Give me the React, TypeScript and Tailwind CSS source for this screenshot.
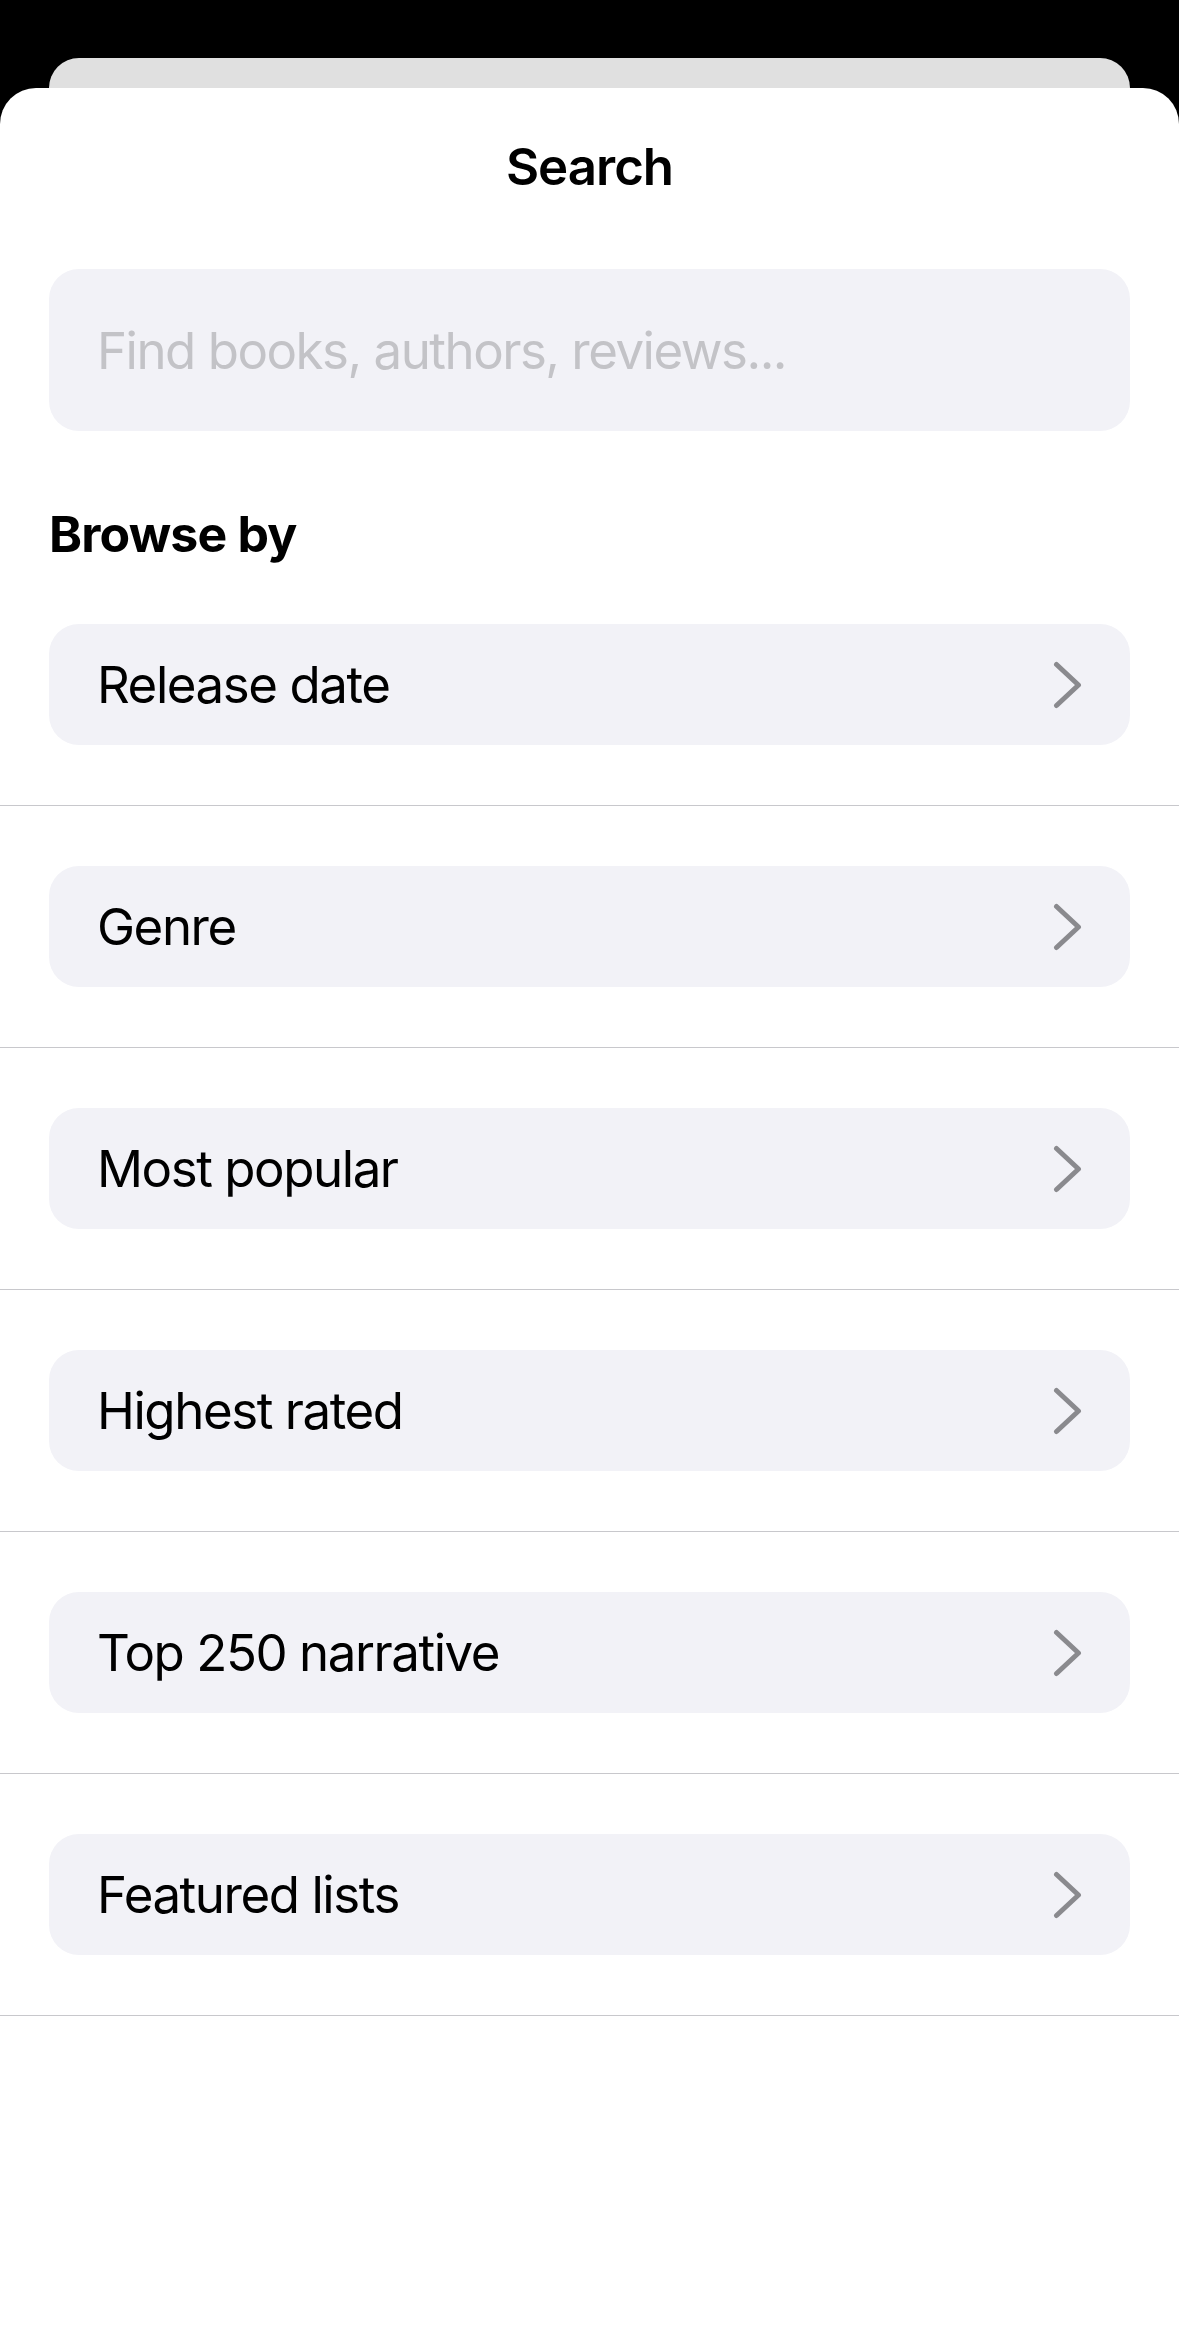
import React from "react";

const rows = [
  "Release date",
  "Genre",
  "Most popular",
  "Highest rated",
  "Top 250 narrative",
  "Featured lists",
];

const Chevron = () => (
  <svg width="29" height="48" viewBox="0 0 29 48" fill="none">
    <path
      d="M3.5 3.5 L25.5 24 L3.5 44.5"
      stroke="#8a8a8e"
      strokeWidth="5"
      strokeLinecap="round"
      strokeLinejoin="round"
    />
  </svg>
);

const App = () => {
  return (
    <div
      className="w-[1179px] h-[2325px] bg-black flex flex-col overflow-hidden"
      style={{ fontFamily: "Inter, 'Noto Sans', sans-serif" }}
    >
      {/* sheet behind */}
      <div className="mx-[49px] mt-[58px] h-[30px] rounded-t-[30px] bg-[#e0e0e0] shrink-0" />

      {/* search sheet */}
      <div className="flex-1 bg-white rounded-t-[36px] flex flex-col">
        <h1 className="pt-[48px] text-center text-[51px] leading-[61px] font-semibold text-black tracking-[-1px]">
          Search
        </h1>

        <div className="mx-[49px] mt-[72px] h-[162px] rounded-[30px] bg-[#f2f2f7] flex items-center pl-[48px] pr-[49px]">
          <input
            placeholder="Find books, authors, reviews..."
            className="w-full bg-transparent outline-none text-[51px] leading-[61px] text-black placeholder:text-[#c3c3c7] tracking-[-1.5px]"
          />
        </div>

        <h2 className="mx-[49px] mt-[73px] text-[50px] leading-[60px] font-bold text-black tracking-[-0.85px]">
          Browse by
        </h2>

        <div className="mt-[60px]">
          {rows.map((text, index) => (
            <div
              key={index}
              className={`px-[49px] pb-[60px] border-b border-[#c8c8cc] ${
                index === 0 ? "" : "pt-[60px]"
              }`}
            >
              <div className="h-[121px] rounded-[30px] bg-[#f2f2f7] flex items-center justify-between pl-[48px] pr-[48px] cursor-pointer">
                <span className="text-[51px] leading-[61px] text-black tracking-[-1.45px]">
                  {text}
                </span>
                <Chevron />
              </div>
            </div>
          ))}
        </div>
      </div>
    </div>
  );
};

export default App;
